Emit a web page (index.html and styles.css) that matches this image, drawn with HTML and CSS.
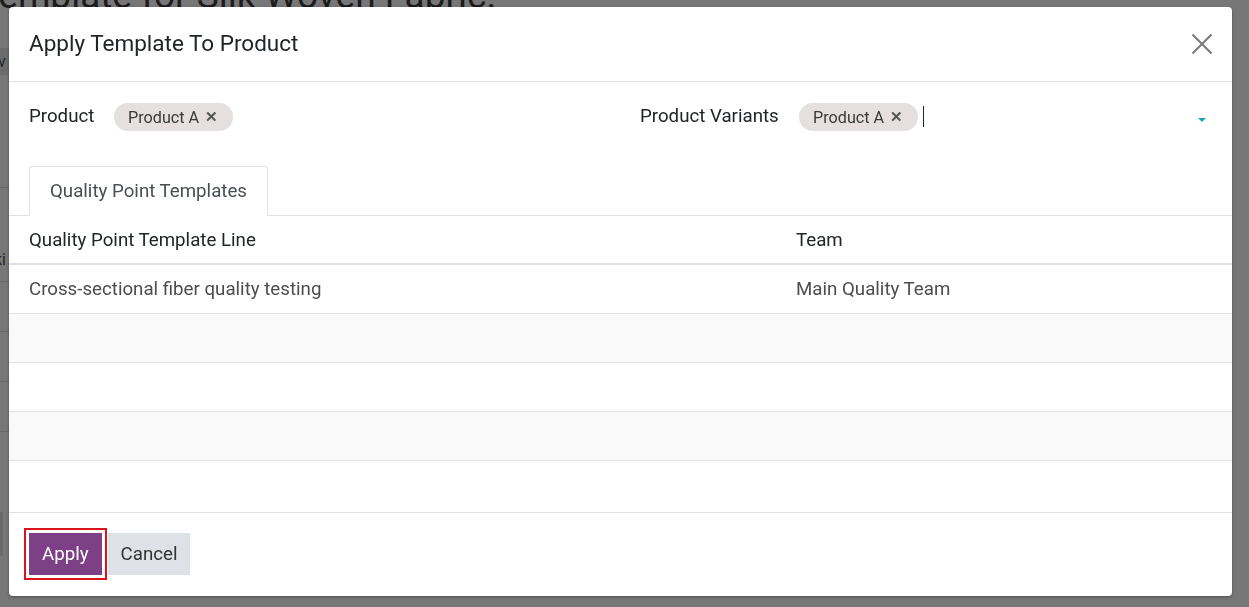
FILE: index.html
```html
<!DOCTYPE html>
<html>
<head>
<meta charset="utf-8">
<link rel="stylesheet" href="styles.css">
</head>
<body>
<div class="page">
  <h1 class="page-title">Template for Silk Woven Fabric.</h1>
  <div class="page-bar"><span class="page-bar-text">v</span></div>
  <div class="page-line l1"></div>
  <div class="page-row">ki</div>
  <div class="page-line l2"></div>
  <div class="page-line l3"></div>
  <div class="page-line l4"></div>
  <div class="page-line l5"></div>
  <div class="page-btn"></div>
</div>

<div class="modal">
  <header class="modal-header">
    <h4 class="modal-title">Apply Template To Product</h4>
    <button class="close-btn" aria-label="Close">
      <svg width="22" height="22" viewBox="0 0 22 22"><path d="M1.5 1.5 L20.5 20.5 M20.5 1.5 L1.5 20.5" stroke="#7a7a7a" stroke-width="2" fill="none"/></svg>
    </button>
  </header>

  <div class="modal-body">
    <div class="fields">
      <div class="field field-left">
        <label class="field-label lbl-product">Product</label>
        <div class="field-value">
          <span class="tag">Product A <span class="tag-x">✕</span></span>
        </div>
      </div>
      <div class="field field-right">
        <label class="field-label lbl-variants">Product Variants</label>
        <div class="field-value many2many">
          <span class="tag">Product A <span class="tag-x">✕</span></span>
          <span class="cursor"></span>
          <span class="caret"></span>
        </div>
      </div>
    </div>

    <div class="notebook">
      <ul class="tabs">
        <li class="tab active">Quality Point Templates</li>
      </ul>
    </div>

    <table class="lines">
      <thead>
        <tr><th class="col-line">Quality Point Template Line</th><th>Team</th></tr>
      </thead>
      <tbody>
        <tr><td>Cross-sectional fiber quality testing</td><td>Main Quality Team</td></tr>
        <tr class="striped"><td></td><td></td></tr>
        <tr><td></td><td></td></tr>
        <tr class="striped"><td></td><td></td></tr>
      </tbody>
    </table>
  </div>

  <footer class="modal-footer">
    <button class="btn btn-primary">Apply</button>
    <button class="btn btn-secondary">Cancel</button>
  </footer>
</div>
</body>
</html>
```

FILE: styles.css
```css
* { box-sizing: border-box; }
html, body { margin: 0; padding: 0; }
body {
  width: 1249px;
  height: 607px;
  overflow: hidden;
  background: #777777;
  font-family: Roboto, "Liberation Sans", sans-serif;
}

/* dimmed page behind the dialog */
.page { position: relative; height: 607px; }
.page-title {
  margin: -26px 0 0 -22px;
  font-size: 37px;
  font-weight: 400;
  color: #1c1c1c;
  white-space: nowrap;
  line-height: 44px;
}
.page-bar {
  margin-top: 30px;
  height: 27px;
  width: 40px;
  background: #6c6c6c;
  color: #262626;
  font-size: 16px;
  line-height: 27px;
}
.page-bar-text { margin-left: -2px; }
.page-line { height: 1px; background: #6a6a6a; width: 40px; }
.l1 { margin-top: 112px; }
.page-row { margin-top: 62px; font-size: 16px; color: #262626; margin-left: -6px; }
.l2 { margin-top: 12px; }
.l3 { margin-top: 49px; }
.l4 { margin-top: 49px; }
.l5 { margin-top: 49px; }
.page-btn { margin-top: 80px; width: 3px; height: 44px; background: #6a6a6a; }

/* dialog */
.modal {
  position: fixed;
  left: 9px;
  top: 7px;
  width: 1223px;
  height: 589px;
  background: #fff;
  border-radius: 4px;
  box-shadow: 0 1px 3px rgba(0,0,0,0.35);
  display: flex;
  flex-direction: column;
  color: #212529;
}
.modal-header {
  height: 75px;
  flex: none;
  border-bottom: 1px solid #dee2e6;
  display: flex;
  align-items: center;
  justify-content: space-between;
  padding: 0 19px 0 20px;
}
.modal-title {
  margin: 0 0 2px 0;
  font-size: 22.5px;
  font-weight: 400;
  color: #212529;
}
.close-btn {
  border: 0;
  background: none;
  padding: 0;
  width: 22px;
  height: 22px;
  display: flex;
  cursor: pointer;
}

.modal-body { flex: 1; display: flex; flex-direction: column; }
.fields {
  display: grid;
  grid-template-columns: 611px 1fr;
  padding: 21px 20px 0 20px;
}
.field { display: flex; align-items: center; height: 28px; }
.field-label { font-size: 18.7px; color: #212529; margin-top: -3px; }
.lbl-product { width: 85px; }
.lbl-variants { width: 159px; }
.field-value { display: flex; align-items: center; }
.many2many { flex: 1; position: relative; height: 28px; }
.tag {
  display: inline-flex;
  align-items: center;
  height: 28px;
  padding: 0 15px 0 14px;
  border-radius: 14px;
  background: #e6dfdf;
  color: #3a3a3a;
  font-size: 16.2px;
  white-space: nowrap;
}
.tag-x { margin-left: 6px; font-size: 14.5px; font-weight: 700; color: #555; }
.cursor { width: 1px; height: 21px; background: #222; margin-left: 5px; margin-top: -2px; }
.caret {
  position: absolute;
  right: 6px;
  top: 15px;
  width: 0; height: 0;
  border-left: 4px solid transparent;
  border-right: 4px solid transparent;
  border-top: 4px solid #1aa3bb;
}

.notebook { margin-top: 35px; border-bottom: 1px solid #dee2e6; padding-left: 20px; }
.tabs { list-style: none; margin: 0 0 -1px 0; padding: 0; display: flex; }
.tab {
  height: 50px;
  padding: 0 20px 0 20px;
  display: flex;
  align-items: center;
  font-size: 18.7px;
  color: #4a4f55;
  border: 1px solid #dee2e6;
  border-bottom-color: #fff;
  border-radius: 3px 3px 0 0;
  background: #fff;
}

.lines { width: 100%; border-collapse: collapse; font-size: 18.7px; }
.lines th {
  text-align: left;
  font-weight: 400;
  color: #212529;
  height: 48px;
  padding: 0 20px;
  border-bottom: 2px solid #dee2e6;
}
.lines th.col-line { width: 767px; }
.lines td {
  height: 49px;
  padding: 0 20px;
  color: #4d4d4d;
  border-bottom: 1px solid #e4e4e4;
}
.lines tr.striped td { background: #f9f9f9; }

.modal-footer {
  height: 84px;
  flex: none;
  border-top: 1px solid #dee2e6;
  display: flex;
  align-items: center;
  gap: 6px;
  padding: 0 20px 2px 20px;
}
.btn {
  height: 42px;
  border: 0;
  border-radius: 0;
  font-family: Roboto, "Liberation Sans", sans-serif;
  font-size: 18.7px;
  padding: 0 13px;
}
.btn-primary {
  background: #7d3f86;
  color: #fff;
  outline: 2px solid #d9141c;
  outline-offset: 3px;
}
.btn-secondary { background: #dee1e5; color: #333; }
```
